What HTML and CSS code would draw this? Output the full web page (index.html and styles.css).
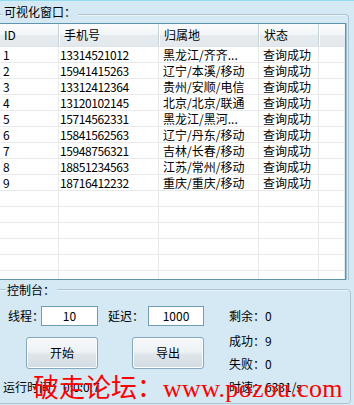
FILE: index.html
```html
<!DOCTYPE html>
<html lang="zh-CN">
<head>
<meta charset="utf-8">
<title>可视化窗口</title>
<link rel="stylesheet" href="styles.css">
</head>
<body>
<div class="win">
  <div class="group group-view">
    <div class="group-title">可视化窗口：</div>
    <div class="list">
      <div class="list-head">
        <div class="hcell">ID</div>
        <div class="hcell">手机号</div>
        <div class="hcell">归属地</div>
        <div class="hcell">状态</div>
        <div class="hcell hcell-last"></div>
      </div>
      <div class="list-row"><div class="cell">1</div><div class="cell num">13314521012</div><div class="cell">黑龙江/齐齐...</div><div class="cell">查询成功</div><div class="cell"></div></div>
      <div class="list-row"><div class="cell">2</div><div class="cell num">15941415263</div><div class="cell">辽宁/本溪/移动</div><div class="cell">查询成功</div><div class="cell"></div></div>
      <div class="list-row"><div class="cell">3</div><div class="cell num">13312412364</div><div class="cell">贵州/安顺/电信</div><div class="cell">查询成功</div><div class="cell"></div></div>
      <div class="list-row"><div class="cell">4</div><div class="cell num">13120102145</div><div class="cell">北京/北京/联通</div><div class="cell">查询成功</div><div class="cell"></div></div>
      <div class="list-row"><div class="cell">5</div><div class="cell num">15714562331</div><div class="cell">黑龙江/黑河...</div><div class="cell">查询成功</div><div class="cell"></div></div>
      <div class="list-row"><div class="cell">6</div><div class="cell num">15841562563</div><div class="cell">辽宁/丹东/移动</div><div class="cell">查询成功</div><div class="cell"></div></div>
      <div class="list-row"><div class="cell">7</div><div class="cell num">15948756321</div><div class="cell">吉林/长春/移动</div><div class="cell">查询成功</div><div class="cell"></div></div>
      <div class="list-row"><div class="cell">8</div><div class="cell num">18851234563</div><div class="cell">江苏/常州/移动</div><div class="cell">查询成功</div><div class="cell"></div></div>
      <div class="list-row"><div class="cell">9</div><div class="cell num">18716412232</div><div class="cell">重庆/重庆/移动</div><div class="cell">查询成功</div><div class="cell"></div></div>
      <div class="list-row"><div class="cell"></div><div class="cell"></div><div class="cell"></div><div class="cell"></div><div class="cell"></div></div>
      <div class="list-row"><div class="cell"></div><div class="cell"></div><div class="cell"></div><div class="cell"></div><div class="cell"></div></div>
      <div class="list-row"><div class="cell"></div><div class="cell"></div><div class="cell"></div><div class="cell"></div><div class="cell"></div></div>
      <div class="list-row"><div class="cell"></div><div class="cell"></div><div class="cell"></div><div class="cell"></div><div class="cell"></div></div>
      <div class="list-row"><div class="cell"></div><div class="cell"></div><div class="cell"></div><div class="cell"></div><div class="cell"></div></div>
      <div class="list-row"><div class="cell"></div><div class="cell"></div><div class="cell"></div><div class="cell"></div><div class="cell"></div></div>
      <div class="list-row"><div class="cell"></div><div class="cell"></div><div class="cell"></div><div class="cell"></div><div class="cell"></div></div>
    </div>
  </div>

  <div class="group group-ctrl">
    <div class="group-title title-ctrl">控制台：</div>
    <div class="ctrl">
      <div class="ctrl-left">
        <div class="param-row">
          <span class="label label-thread">线程：</span>
          <div class="input input-thread">10</div>
          <span class="label label-delay">延迟：</span>
          <div class="input input-delay">1000</div>
        </div>
        <div class="btn-row">
          <div class="btn">开始</div>
          <div class="btn">导出</div>
        </div>
        <div class="runtime">运行时间：0:0:0:7</div>
      </div>
      <div class="stats">
        <div class="stat">剩余：0</div>
        <div class="stat">成功：9</div>
        <div class="stat">失败：0</div>
        <div class="stat">时速：6331/s</div>
      </div>
    </div>
  </div>

  <div class="watermark">破走论坛：<span class="wm-url">www.pozou.com</span></div>
</div>
</body>
</html>
```

FILE: styles.css
```css
html, body {
  margin: 0;
  padding: 0;
}
body {
  background: #d4e9f3;
  font-family: "Noto Sans CJK SC", "Noto Sans", sans-serif;
  font-size: 12px;
  color: #000;
}
.win {
  position: relative;
  width: 354px;
  height: 405px;
  overflow: hidden;
  background: #d4e9f3;
  border-top: 1px solid #93dcf0;
  box-sizing: border-box;
}
.group {
  box-sizing: border-box;
  border: 1px solid #aec5d1;
  border-radius: 4px;
  box-shadow: inset 1px 1px 0 #eaf5fa;
}
.group-title {
  position: relative;
  width: fit-content;
  line-height: 14px;
  height: 14px;
  padding: 0 2px 0 1px;
  background: #d4e9f3;
  white-space: nowrap;
}
.group-view {
  margin-top: 13px;
  margin-left: -3px;
  width: 352px;
  border-bottom: none;
  border-radius: 4px 4px 0 0;
}
.group-view .group-title {
  margin-top: -10px;
  margin-left: 5px;
}
.list {
  margin-top: 4px;
  margin-right: 2px;
  height: 257px;
  box-sizing: border-box;
  border: 1px solid #5d93ad;
  box-shadow: 1px 0 0 #9cc2d3;
  background: #fff;
  overflow: hidden;
}
.list-head,
.list-row {
  display: grid;
  grid-template-columns: 60px 100px 100px 60px 1fr;
}
.list-head {
  height: 23px;
  box-sizing: border-box;
  border-bottom: 1px solid #dfe4e8;
  background: linear-gradient(#fafbfc 0%, #f2f5f7 48%, #e6ebef 52%, #e3e8ec 100%);
}
.hcell {
  box-sizing: border-box;
  padding-left: 5px;
  line-height: 22px;
  border-right: 1px solid #c9d3da;
  box-shadow: 1px 0 0 #fff;
  white-space: nowrap;
}
.hcell-last {
  border-right: none;
  box-shadow: none;
}
.list-row {
  height: 16px;
  box-sizing: border-box;
  border-bottom: 1px solid #e8e9ea;
}
.cell {
  box-sizing: border-box;
  padding-left: 4px;
  line-height: 15px;
  border-right: 1px solid #e8e9ea;
  white-space: nowrap;
  overflow: hidden;
}
.cell.num {
  padding-left: 1px;
  letter-spacing: -0.4px;
}
.group-ctrl {
  margin-top: 9px;
  margin-left: -3px;
  width: 354px;
  height: 115px;
}
.group-ctrl .title-ctrl {
  margin-top: -7px;
  margin-left: 8px;
}
.ctrl {
  display: flex;
}
.ctrl-left {
  width: 231px;
  display: flex;
  flex-direction: column;
}
.param-row {
  margin-top: 9px;
  padding-left: 10px;
  display: flex;
  align-items: center;
  height: 20px;
}
.label {
  white-space: nowrap;
  line-height: 14px;
}
.label-thread {
  width: 33px;
}
.label-delay {
  width: 40px;
  margin-left: 10px;
}
.input {
  box-sizing: border-box;
  height: 20px;
  border: 1px solid #6f9fb7;
  background: #fff;
  text-align: center;
  line-height: 18px;
}
.input-thread {
  width: 57px;
}
.input-delay {
  width: 56px;
}
.btn-row {
  margin-top: 11px;
  padding-left: 28px;
  display: flex;
  gap: 34px;
}
.btn {
  box-sizing: border-box;
  width: 72px;
  height: 32px;
  border: 1px solid #87a8bc;
  border-radius: 3px;
  background: linear-gradient(#f7f9fa 0%, #eef2f5 45%, #dfe6eb 55%, #d2dce3 100%);
  box-shadow: inset 0 0 0 1px #fbfdfe;
  text-align: center;
  line-height: 30px;
}
.runtime {
  margin-top: 11px;
  padding-left: 5px;
  line-height: 14px;
  white-space: nowrap;
}
.stats {
  margin-top: 12px;
  display: grid;
  grid-template-rows: 25px 23px 23px 14px;
}
.stat {
  line-height: 14px;
  white-space: nowrap;
}
.watermark {
  position: absolute;
  left: 33px;
  top: 372px;
  color: #ff0000;
  font-family: "Noto Sans CJK SC", sans-serif;
  font-size: 26px;
  line-height: 26px;
  white-space: nowrap;
}
.wm-url {
  font-family: "Liberation Serif", serif;
  letter-spacing: 0.3px;
}
```
